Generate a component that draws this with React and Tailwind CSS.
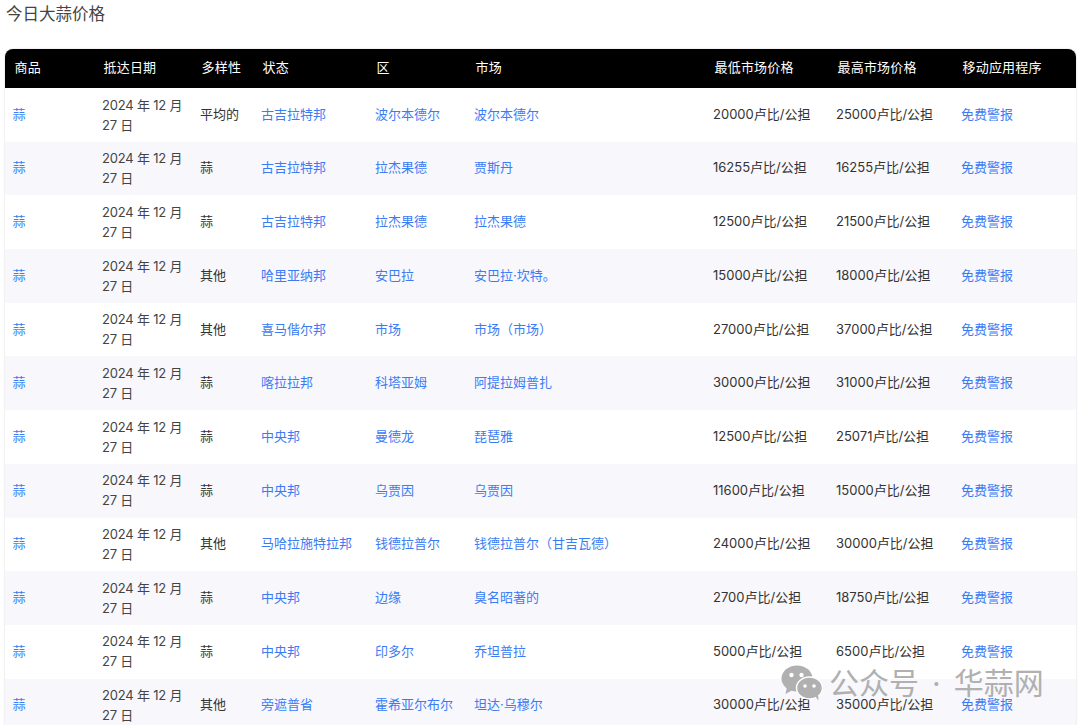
import React from "react";

const rows = [
  ["平均的", "古吉拉特邦", "波尔本德尔", "波尔本德尔", "20000", "25000"],
  ["蒜", "古吉拉特邦", "拉杰果德", "贾斯丹", "16255", "16255"],
  ["蒜", "古吉拉特邦", "拉杰果德", "拉杰果德", "12500", "21500"],
  ["其他", "哈里亚纳邦", "安巴拉", "安巴拉·坎特。", "15000", "18000"],
  ["其他", "喜马偕尔邦", "市场", "市场（市场）", "27000", "37000"],
  ["蒜", "喀拉拉邦", "科塔亚姆", "阿提拉姆普扎", "30000", "31000"],
  ["蒜", "中央邦", "曼德龙", "琵琶雅", "12500", "25071"],
  ["蒜", "中央邦", "乌贾因", "乌贾因", "11600", "15000"],
  ["其他", "马哈拉施特拉邦", "钱德拉普尔", "钱德拉普尔（甘吉瓦德）", "24000", "30000"],
  ["蒜", "中央邦", "边缘", "臭名昭著的", "2700", "18750"],
  ["蒜", "中央邦", "印多尔", "乔坦普拉", "5000", "6500"],
  ["其他", "旁遮普省", "霍希亚尔布尔", "坦达·乌穆尔", "30000", "35000"],
];

const headers = ["商品", "抵达日期", "多样性", "状态", "区", "市场", "最低市场价格", "最高市场价格", "移动应用程序"];

// two overlapping chat bubbles, the small one has a white ring
const WechatIcon = () => (
  <svg width="42" height="36" viewBox="0 0 42 36">
    <ellipse cx="16" cy="13.500" rx="15.500" ry="13" fill="#b0b0b0" />
    <path d="M6 22l-1.500 7 7-4z" fill="#b0b0b0" />
    <ellipse cx="28.500" cy="23" rx="13" ry="11" fill="#b0b0b0" stroke="#fff" strokeWidth="1.500" />
    <path d="M34 31l3.500 4.500-.5-6.500z" fill="#b0b0b0" />
    <circle cx="10.500" cy="10" r="2.200" fill="#fff" />
    <circle cx="20.500" cy="10" r="2.200" fill="#fff" />
    <circle cx="24" cy="21" r="1.800" fill="#fff" />
    <circle cx="33" cy="21" r="1.800" fill="#fff" />
  </svg>
);

export default function App() {
  return (
    <div className="relative h-screen overflow-hidden bg-white font-['Inter','Noto_Sans_CJK_SC',sans-serif] text-[13px] text-[#333]">
      <h1 className="pl-[6px] pt-[2px] pb-[1px] text-[16.5px] font-normal leading-[24px] text-[#444]">今日大蒜价格</h1>
      <div className="ml-[5px] mt-[22px] w-[1071px] rounded-t-lg shadow-[0_0_2px_rgba(0,0,0,0.2)]">
        <table className="w-full table-fixed border-collapse">
          <colgroup>
            <col className="w-[89px]" />
            <col className="w-[98px]" />
            <col className="w-[61px]" />
            <col className="w-[114px]" />
            <col className="w-[99px]" />
            <col className="w-[239px]" />
            <col className="w-[123px]" />
            <col className="w-[125px]" />
            <col className="w-[123px]" />
          </colgroup>
          <thead>
            <tr className="h-[39px] bg-black text-white">
              {headers.map((h, i) => (
                <th
                  key={h}
                  className={`pl-[9.5px] pb-[1px] text-left text-[13px] font-normal tracking-[0.2px] ${i === 0 ? "rounded-tl-lg" : ""} ${i === 8 ? "rounded-tr-lg" : ""}`}
                >
                  {h}
                </th>
              ))}
            </tr>
          </thead>
          <tbody>
            {rows.map((row, index) => (
              <tr key={index} className={`h-[53.7px] ${index % 2 === 1 ? "bg-[#f7f7fc]" : "bg-white"}`}>
                <td className="pl-[7.5px] pb-[0.6px] text-[#3b7cf5]">蒜</td>
                <td className="pl-[8px] pr-[4px] pb-[0.6px] leading-[20px] tracking-[-0.2px] text-[#444]">2024 年 12 月 27 日</td>
                <td className="pl-[8px] pb-[0.6px]">{row[0]}</td>
                <td className="pl-[8px] pb-[0.6px] text-[#3b7cf5]">{row[1]}</td>
                <td className="pl-[8px] pb-[0.6px] text-[#3b7cf5]">{row[2]}</td>
                <td className="pl-[8px] pb-[0.6px] text-[#3b7cf5]">{row[3]}</td>
                <td className="pl-[8px] pb-[0.6px] whitespace-nowrap">{row[4]}卢比/公担</td>
                <td className="pl-[8px] pb-[0.6px] whitespace-nowrap">{row[5]}卢比/公担</td>
                <td className="pl-[8px] pb-[0.6px] text-[#3b7cf5]">免费警报</td>
              </tr>
            ))}
          </tbody>
        </table>
      </div>
      <div className="absolute left-[781px] top-[665px] flex items-center text-[30px] leading-[36px] text-[#b0b0b0]">
        <WechatIcon />
        <span className="ml-[6px]">公众号</span>
        <span className="mx-[13px]">·</span>
        <span>华蒜网</span>
      </div>
    </div>
  );
}
